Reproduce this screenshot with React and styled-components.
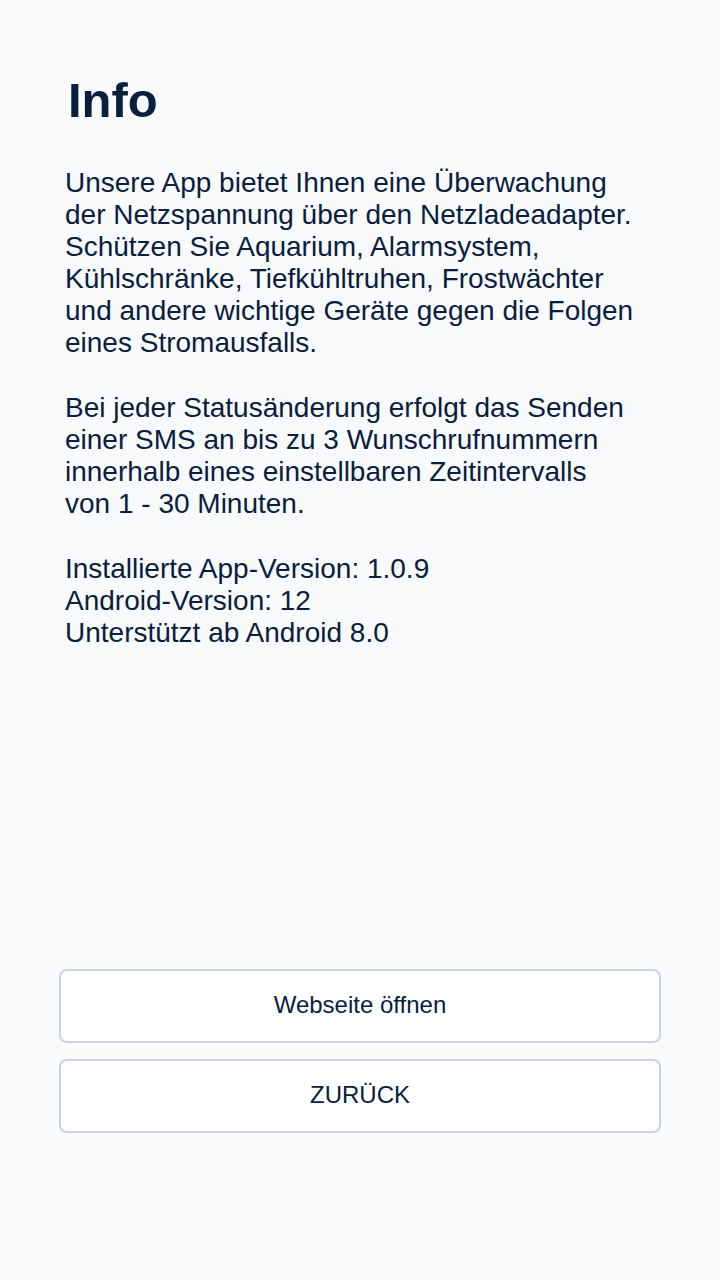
import React from 'react';
import styled, { createGlobalStyle } from 'styled-components';

const GlobalStyle = createGlobalStyle`
  * {
    box-sizing: border-box;
  }

  body {
    margin: 0;
    background: #f8fafc;
    color: #08203e;
    font-family: 'Liberation Sans', Arial, sans-serif;
  }
`

const Page = styled.main`
  display: flex;
  flex-direction: column;
  min-height: 100vh;
  padding: 72px 59px 147px;
`

const Title = styled.h1`
  margin: 0 0 39px;
  padding: 0 9px;
  font-size: 49px;
  line-height: 56px;
`

const InfoText = styled.div`
  padding: 0 6px;
  font-size: 28px;
  line-height: 32px;
`

const Paragraph = styled.p`
  margin: 0 0 33px;
`

const Actions = styled.div`
  display: flex;
  flex-direction: column;
  gap: 16px;
  margin-top: auto;
`

const ActionButton = styled.button`
  height: 74px;
  padding: 0 16px 2px;
  border: 2px solid #cbd5e1;
  border-radius: 8px;
  background: #fff;
  color: inherit;
  font-family: inherit;
  font-size: 24px;
  cursor: pointer;
`

const paragraphs = [
  [
    'Unsere App bietet Ihnen eine Überwachung',
    'der Netzspannung über den Netzladeadapter.',
    'Schützen Sie Aquarium, Alarmsystem,',
    'Kühlschränke, Tiefkühltruhen, Frostwächter',
    'und andere wichtige Geräte gegen die Folgen',
    'eines Stromausfalls.',
  ],
  [
    'Bei jeder Statusänderung erfolgt das Senden',
    'einer SMS an bis zu 3 Wunschrufnummern',
    'innerhalb eines einstellbaren Zeitintervalls',
    'von 1 - 30 Minuten.',
  ],
  [
    'Installierte App-Version: 1.0.9',
    'Android-Version: 12',
    'Unterstützt ab Android 8.0',
  ],
];

const App = () => {
  return (
    <>
      <GlobalStyle />
      <Page>
        <Title>Info</Title>
        <InfoText>
          {paragraphs.map((lines, index) => (
            <Paragraph key={index}>
              {lines.map((line, i) => (
                <React.Fragment key={line}>
                  {i > 0 && <br />}
                  {line}
                </React.Fragment>
              ))}
            </Paragraph>
          ))}
        </InfoText>
        <Actions>
          <ActionButton type="button">Webseite öffnen</ActionButton>
          <ActionButton type="button">ZURÜCK</ActionButton>
        </Actions>
      </Page>
    </>
  );
};

export default App;
